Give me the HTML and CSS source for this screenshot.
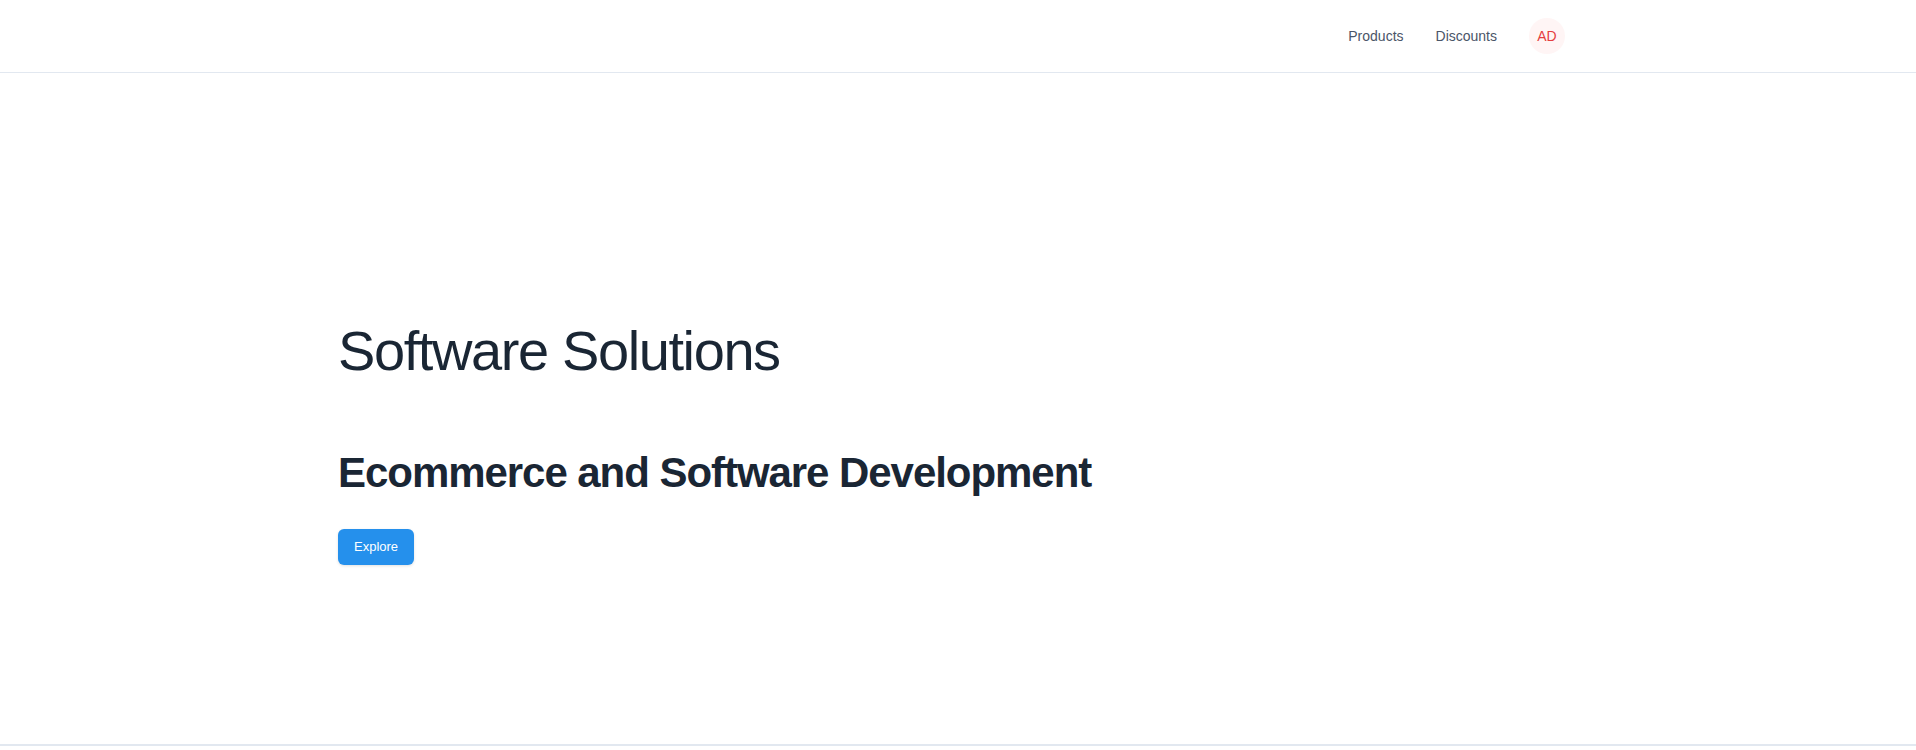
FILE: index.html
```html
<!DOCTYPE html>
<html lang="en">
<head>
<meta charset="utf-8">
<title>Software Solutions</title>
<link rel="stylesheet" href="styles.css">
</head>
<body>
<div class="page">
  <header class="topbar">
    <nav class="nav">
      <a class="nav-link" href="#">Products</a>
      <a class="nav-link" href="#">Discounts</a>
      <span class="avatar">AD</span>
    </nav>
  </header>
  <main class="hero">
    <h1 class="hero-title">Software Solutions</h1>
    <h2 class="hero-subtitle">Ecommerce and Software Development</h2>
    <button class="btn" type="button">Explore</button>
  </main>
  <footer class="footer"></footer>
</div>
</body>
</html>
```
FILE: styles.css
```css
* { box-sizing: border-box; }
html, body { margin: 0; padding: 0; background: #ffffff; }
body {
  font-family: "Liberation Sans", Arial, sans-serif;
  color: #1A2634;
}
.page {
  display: flex;
  flex-direction: column;
  min-height: 750px;
}
.topbar {
  height: 73px;
  border-bottom: 1px solid #E2E8F0;
  display: flex;
  justify-content: flex-end;
  align-items: center;
  padding: 0 351px 1px 0;
}
.nav {
  display: flex;
  align-items: center;
}
.nav-link {
  font-size: 14px;
  color: #4A5568;
  text-decoration: none;
  padding: 0 16px;
  line-height: 20px;
}
.avatar {
  width: 36px;
  height: 36px;
  border-radius: 50%;
  background: #FFF5F5;
  color: #E53E3E;
  font-size: 14px;
  display: flex;
  align-items: center;
  justify-content: center;
  margin-left: 16px;
}
.hero {
  height: 671px;
  padding: 244px 0 0 338px;
  display: flex;
  flex-direction: column;
  align-items: flex-start;
}
.hero-title {
  margin: 0;
  font-size: 56px;
  font-weight: 400;
  line-height: 1.2;
  letter-spacing: -0.025em;
  color: #1A2634;
}
.hero-subtitle {
  margin: 64px 0 0;
  font-size: 42px;
  font-weight: 700;
  line-height: 1.2;
  letter-spacing: -0.025em;
  color: #1A2634;
}
.btn {
  margin-top: 30px;
  height: 36px;
  padding: 0 16px;
  border: none;
  border-radius: 6px;
  background: #2590EC;
  color: #ffffff;
  font-family: "Liberation Sans", Arial, sans-serif;
  font-size: 13px;
  box-shadow: 0 1px 3px rgba(0,0,0,0.12);
  cursor: pointer;
}
.footer {
  border-top: 2px solid #E2E8F0;
  height: 6px;
}
```
